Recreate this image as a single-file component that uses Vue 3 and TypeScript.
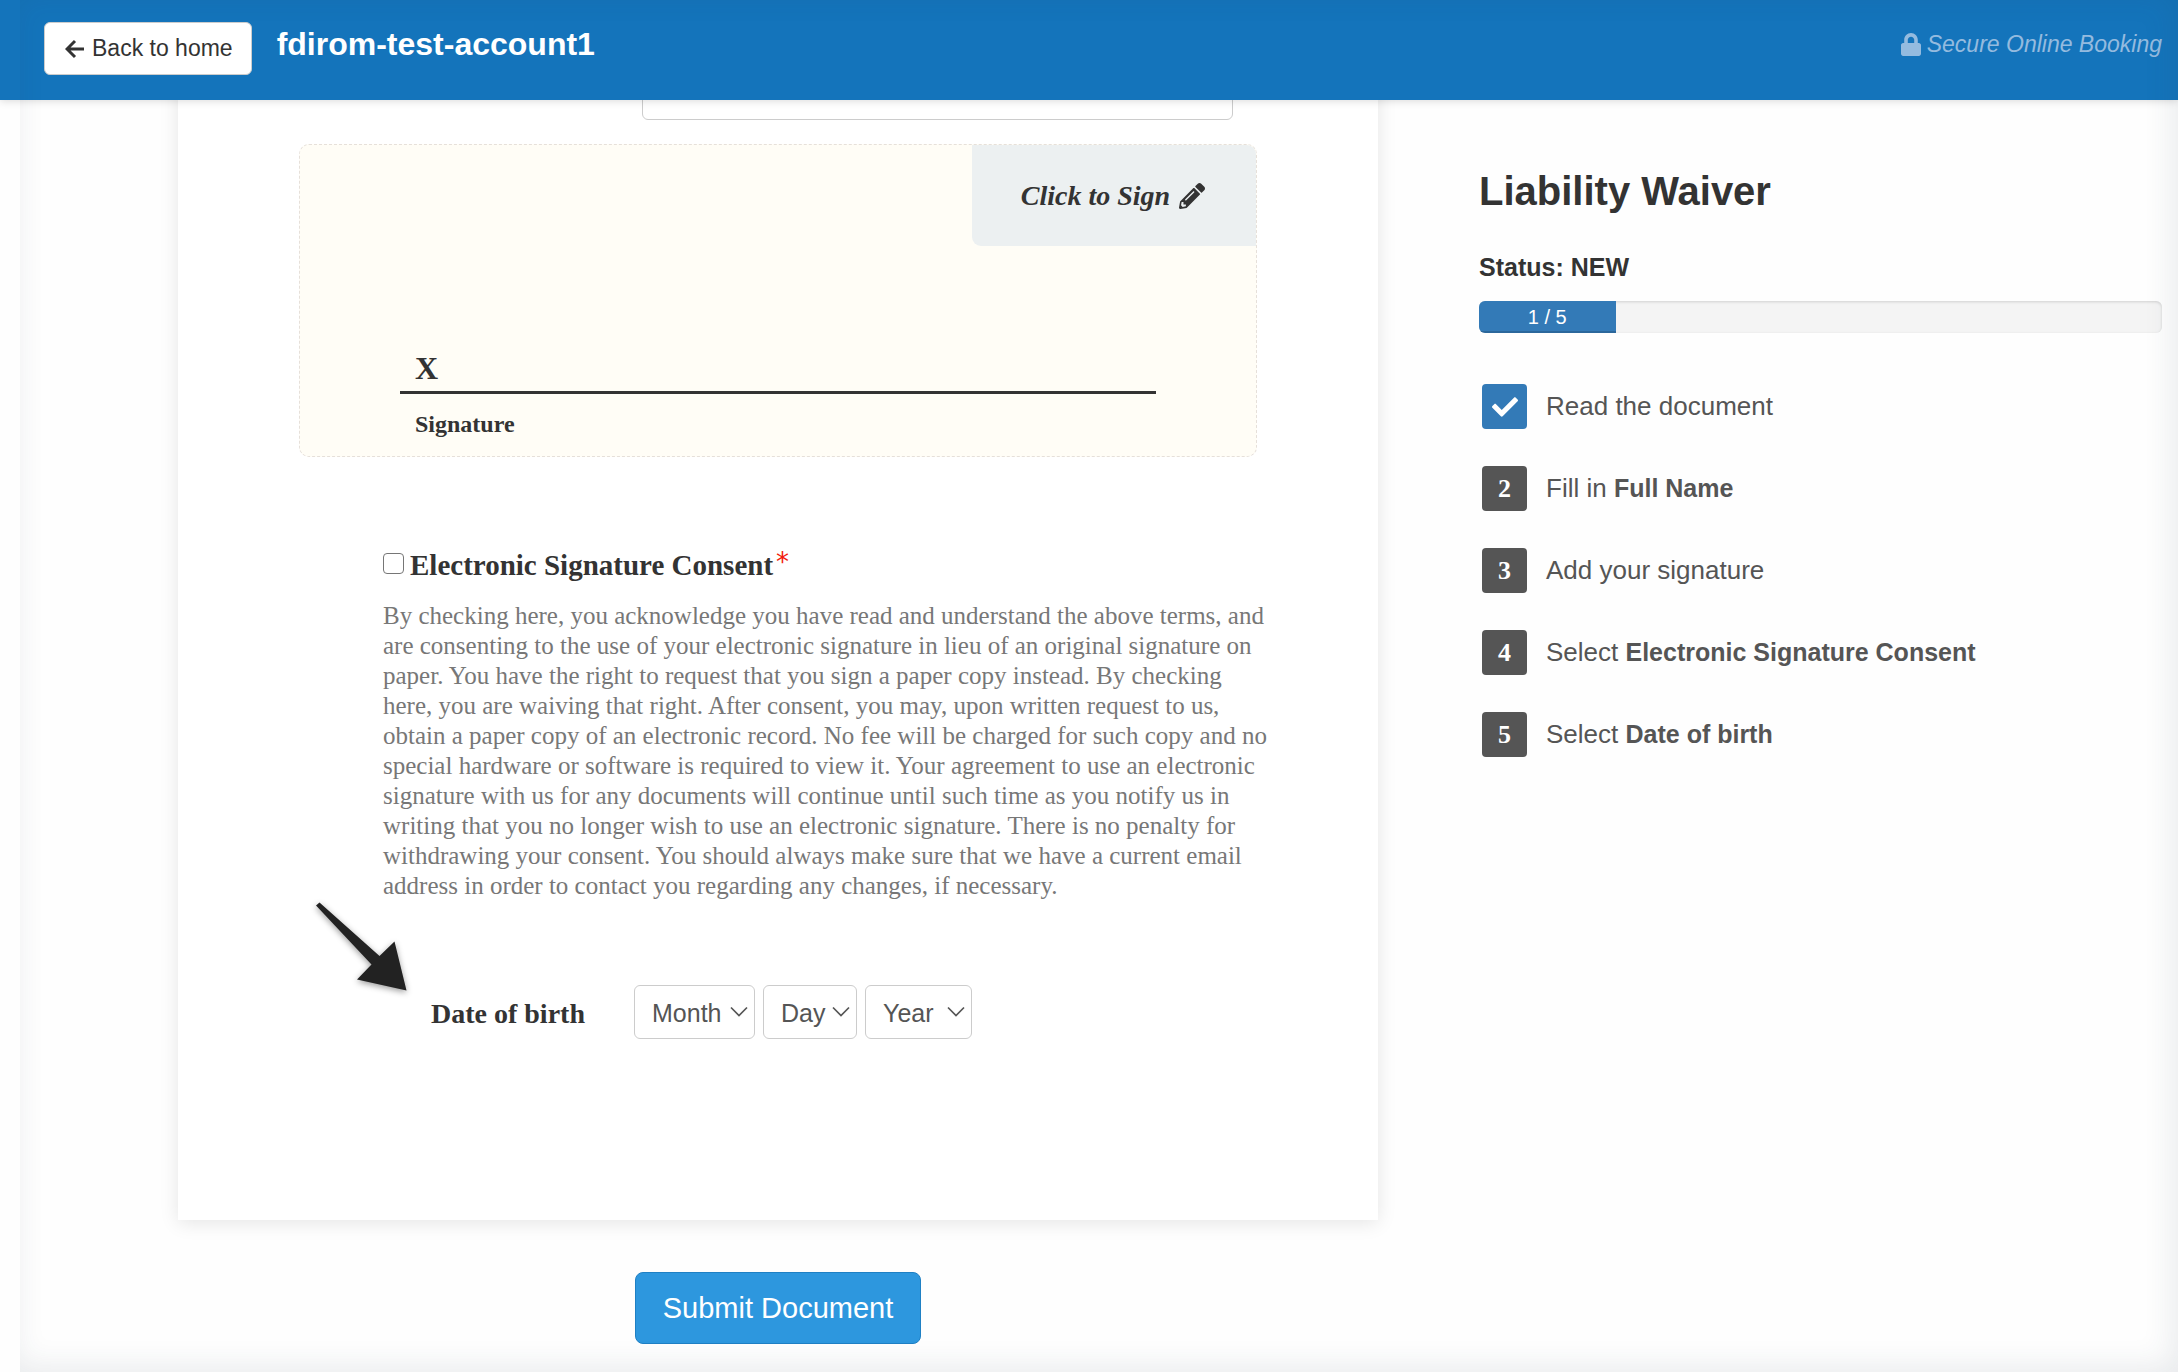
<script setup lang="ts">
import { ref } from 'vue'

interface Step {
  lead: string
  field?: string
  done: boolean
}

const steps: Step[] = [
  { lead: 'Read the document', done: true },
  { lead: 'Fill in', field: 'Full Name', done: false },
  { lead: 'Add your signature', done: false },
  { lead: 'Select', field: 'Electronic Signature Consent', done: false },
  { lead: 'Select', field: 'Date of birth', done: false },
]

const doneCount = steps.filter((s) => s.done).length

const consentLines: string[] = [
  'By checking here, you acknowledge you have read and understand the above terms, and',
  'are consenting to the use of your electronic signature in lieu of an original signature on',
  'paper. You have the right to request that you sign a paper copy instead. By checking',
  'here, you are waiving that right. After consent, you may, upon written request to us,',
  'obtain a paper copy of an electronic record. No fee will be charged for such copy and no',
  'special hardware or software is required to view it. Your agreement to use an electronic',
  'signature with us for any documents will continue until such time as you notify us in',
  'writing that you no longer wish to use an electronic signature. There is no penalty for',
  'withdrawing your consent. You should always make sure that we have a current email',
  'address in order to contact you regarding any changes, if necessary.',
]

const dateParts: string[] = ['Month', 'Day', 'Year']

const fullName = ref('')
const consent = ref(false)
</script>

<template>
  <div class="page">
    <header class="topbar">
      <a class="back" href="#">
        <svg width="20" height="20" viewBox="0 0 20 20" aria-hidden="true">
          <path d="M10 2 2 10l8 8M2 10h17" fill="none" stroke="currentColor" stroke-width="3" />
        </svg>
        Back to home
      </a>
      <span class="account">fdirom-test-account1</span>
      <span class="secure">
        <svg width="20" height="23" viewBox="0 0 448 512" aria-hidden="true">
          <path fill="currentColor" d="M400 224h-24v-72C376 68.2 307.8 0 224 0S72 68.2 72 152v72H48c-26.500 0-48 21.500-48 48v192c0 26.500 21.500 48 48 48h352c26.500 0 48-21.500 48-48V272c0-26.500-21.500-48-48-48zm-104 0H152v-72c0-39.700 32.300-72 72-72s72 32.300 72 72v72z" />
        </svg>
        <em>Secure Online Booking</em>
      </span>
    </header>

    <main class="content">
      <form class="document" @submit.prevent>
        <section class="sheet">
          <div class="name-row">
            <input v-model="fullName" class="name" type="text" aria-label="Full Name" />
          </div>

          <div class="sign-box">
            <button class="sign-button" type="button">
              Click to Sign
              <svg width="26" height="26" viewBox="0 0 512 512" aria-hidden="true">
                <path fill="currentColor" d="M497.900 142.100l-46.100 46.100c-4.700 4.700-12.300 4.700-17 0l-111-111c-4.700-4.700-4.700-12.300 0-17l46.100-46.100c18.700-18.700 49.100-18.700 67.900 0l60.100 60.100c18.800 18.700 18.800 49.100 0 67.900zM284.200 99.800L21.600 362.400.4 483.900c-2.900 16.400 11.400 30.600 27.800 27.800l121.500-21.300 262.600-262.600c4.700-4.700 4.700-12.300 0-17l-111-111c-4.800-4.700-12.400-4.700-17.100 0zM124.100 339.900c-5.500-5.500-5.500-14.300 0-19.800l154-154c5.500-5.500 14.300-5.500 19.800 0s5.500 14.300 0 19.800l-154 154c-5.500 5.500-14.300 5.500-19.800 0zM88 424h48v36.300l-64.500 11.300-31.100-31.100L51.700 376H88v48z" />
              </svg>
            </button>
            <div class="sign-line">X</div>
            <div class="sign-caption">Signature</div>
          </div>

          <div class="consent">
            <label class="consent-label">
              <input v-model="consent" type="checkbox" />
              <span>Electronic Signature Consent</span>
              <span class="required">*</span>
            </label>
            <p class="consent-text">
              <span v-for="line in consentLines" :key="line">{{ line }}</span>
            </p>
          </div>

          <div class="birth-row">
            <svg class="pointer" width="100" height="100" viewBox="0 0 100 100" aria-hidden="true">
              <path fill="#222" d="M6 5.500 9.500 2.500 69.500 56 84.500 41.500 96.500 90.500 47 79.500 61.500 64.500z" />
            </svg>
            <label class="birth-label" for="birth-month">Date of birth</label>
            <div class="selects">
              <div v-for="part in dateParts" :key="part" class="select" :class="part.toLowerCase()">
                <select :id="'birth-' + part.toLowerCase()" :aria-label="part">
                  <option>{{ part }}</option>
                </select>
                <svg width="18" height="12" viewBox="0 0 18 12" aria-hidden="true">
                  <path d="M1 1.500 9 9.500 17 1.500" fill="none" stroke="currentColor" stroke-width="1.700" />
                </svg>
              </div>
            </div>
          </div>
        </section>
        <button class="submit" type="submit">Submit Document</button>
      </form>

      <aside class="summary">
        <h1>Liability Waiver</h1>
        <h2>Status: NEW</h2>
        <div class="progress" role="progressbar" aria-valuemin="0" :aria-valuemax="steps.length" :aria-valuenow="doneCount">
          <div class="progress-fill" :style="{ width: (doneCount / steps.length) * 100 + '%' }">
            {{ doneCount }} / {{ steps.length }}
          </div>
        </div>
        <ol class="steps">
          <li v-for="(step, i) in steps" :key="i">
            <span class="badge" :class="{ done: step.done }">
              <svg v-if="step.done" width="26" height="26" viewBox="0 0 512 512" aria-hidden="true">
                <path fill="currentColor" d="M173.900 439.400l-166.400-166.400c-10-10-10-26.200 0-36.200l36.200-36.200c10-10 26.200-10 36.200 0L192 312.700 432.100 72.600c10-10 26.200-10 36.200 0l36.200 36.200c10 10 10 26.200 0 36.200l-294.400 294.400c-10 10-26.200 10-36.200 0z" />
              </svg>
              <template v-else>{{ i + 1 }}</template>
            </span>
            <span>{{ step.lead }} <b v-if="step.field">{{ step.field }}</b></span>
          </li>
        </ol>
      </aside>
    </main>
  </div>
</template>

<style>
body {
  margin: 0;
  background: #fefefe;
}
</style>

<style scoped>
.page {
  --sans: "Liberation Sans", Arial, sans-serif;
  --serif: "Liberation Serif", "Times New Roman", serif;
  min-height: 100vh;
  color: #333;
  font-family: var(--sans);
}
.page * {
  box-sizing: border-box;
}
/* soft vignette round the embedded frame */
.page::after {
  content: "";
  position: fixed;
  inset: 0 0 0 20px;
  z-index: 3;
  box-shadow: inset -5px -5px 30px rgba(40, 60, 80, 0.1);
  pointer-events: none;
}

.topbar {
  position: sticky;
  top: 0;
  z-index: 2;
  display: flex;
  align-items: flex-start;
  height: 100px;
  padding: 22px 16px 0 44px;
  background: #1474bb;
  box-shadow: 0 1px 8px rgba(0, 0, 0, 0.15);
  line-height: 45px;
}
.back {
  display: flex;
  align-items: center;
  gap: 7px;
  height: 53px;
  padding: 0 18px 0 20px;
  border: 1px solid #ccc;
  border-radius: 6px;
  background: #fff;
  color: #333;
  font-size: 23px;
  text-decoration: none;
  white-space: nowrap;
}
.account {
  margin-left: 25px;
  color: #fff;
  font-size: 32px;
  font-weight: 700;
}
.secure {
  display: flex;
  align-items: center;
  gap: 6px;
  margin-left: auto;
  color: #94bbdf;
  font-size: 23px;
  white-space: nowrap;
}

.content {
  display: grid;
  grid-template-columns: minmax(0, 1200fr) minmax(0, 683fr);
  gap: 101px;
  padding: 0 16px 0 178px;
}
.document {
  margin-top: -54px;
  padding-bottom: 28px;
}
.sheet {
  padding: 20px 121px 181px;
  background: #fff;
  box-shadow: 0 3px 18px rgba(0, 0, 0, 0.1);
  font-family: var(--serif);
}
.name-row {
  padding: 0 24px 0 343px;
}
.name {
  display: block;
  width: 100%;
  height: 54px;
  padding: 0 18px;
  border: 1px solid #ccc;
  border-radius: 6px;
  background: #fff;
  font: 25px var(--sans);
}
.sign-box {
  display: flex;
  flex-direction: column;
  margin-top: 24px;
  padding-bottom: 17px;
  border: 1px dashed #e6e0da;
  border-radius: 10px;
  background: #fffdf6;
  font-weight: 700;
}
.sign-button {
  display: flex;
  align-items: center;
  align-self: flex-end;
  justify-content: center;
  gap: 9px;
  width: 284px;
  height: 101px;
  padding: 0 8px 0 6px;
  border: 0;
  border-radius: 0 9px 0 9px;
  background: #ecf0f1;
  color: #333;
  font: italic 700 28px var(--serif);
}
.sign-line {
  margin: 106px 100px 0;
  padding: 0 15px 7px;
  border-bottom: 3px solid #333;
  font-size: 32px;
  line-height: 32px;
}
.sign-caption {
  margin: 15px 115px 0;
  font-size: 24px;
  line-height: 30px;
}
.consent {
  margin: 90px 0 0 84px;
}
.consent-label {
  display: flex;
  align-items: center;
  height: 36px;
  font-size: 29px;
  font-weight: 700;
}
.consent-label input {
  appearance: none;
  width: 21px;
  height: 21px;
  margin: 0 6px 4px 0;
  border: 1px solid #767676;
  border-radius: 4px;
  background: #fff;
}
.consent-label input:checked {
  background: #337ab7;
}
.required {
  align-self: flex-start;
  margin-left: 3px;
  color: #f21b0c;
  font: 26px/30px "DejaVu Sans", sans-serif;
}
.consent-text {
  margin: 18px 0 0;
  color: #777;
  font-size: 25px;
  line-height: 30px;
}
.consent-text span {
  display: block;
  white-space: nowrap;
}
.birth-row {
  position: relative;
  display: flex;
  align-items: center;
  margin-top: 84px;
  padding-left: 132px;
}
.pointer {
  position: absolute;
  left: 11px;
  top: -85px;
  overflow: visible;
  filter: drop-shadow(0 2px 3px rgba(0, 0, 0, 0.4));
}
.birth-label {
  width: 203px;
  padding-top: 3px;
  font-size: 28px;
  font-weight: 700;
}
.selects {
  display: flex;
  gap: 8px;
}
.select {
  position: relative;
  color: #555;
}
.select select {
  appearance: none;
  width: 100%;
  height: 54px;
  padding: 1px 0 0 17px;
  border: 1px solid #ccc;
  border-radius: 6px;
  background: #fff;
  color: inherit;
  font: 25px var(--sans);
}
.select svg {
  position: absolute;
  right: 7px;
  top: 21px;
  pointer-events: none;
}
.month {
  width: 121px;
}
.day {
  width: 94px;
}
.year {
  width: 107px;
}
.submit {
  display: block;
  width: 286px;
  height: 72px;
  margin: 52px auto 0;
  border: 1px solid #1f80c4;
  border-radius: 8px;
  background: #2d97de;
  color: #fff;
  font: 29px var(--sans);
}

.summary {
  padding-top: 67px;
}
.summary h1 {
  margin: 0;
  font-size: 40px;
  line-height: 48px;
}
.summary h2 {
  margin: 37px 0 19px;
  font-size: 25px;
  line-height: 30px;
}
.progress {
  height: 32px;
  overflow: hidden;
  border-radius: 6px;
  background: #f4f4f4;
  box-shadow: inset 0 1px 3px rgba(0, 0, 0, 0.15);
}
.progress-fill {
  height: 100%;
  background: #337ab7;
  box-shadow: inset 0 -2px 0 rgba(0, 0, 0, 0.15);
  color: #fff;
  font-size: 20px;
  line-height: 32px;
  text-align: center;
}
.steps {
  display: flex;
  flex-direction: column;
  gap: 37px;
  margin: 51px 0 0;
  padding: 0 0 0 3px;
  color: #555;
  font-size: 26px;
  list-style: none;
}
.steps li {
  display: flex;
  align-items: center;
  gap: 19px;
}
.steps b {
  font-size: 25px;
}
.badge {
  display: flex;
  align-items: center;
  justify-content: center;
  width: 45px;
  height: 45px;
  border-radius: 4px;
  background: #555;
  color: #fff;
  font: 700 26px var(--serif);
}
.badge.done {
  background: #337ab7;
}
</style>
